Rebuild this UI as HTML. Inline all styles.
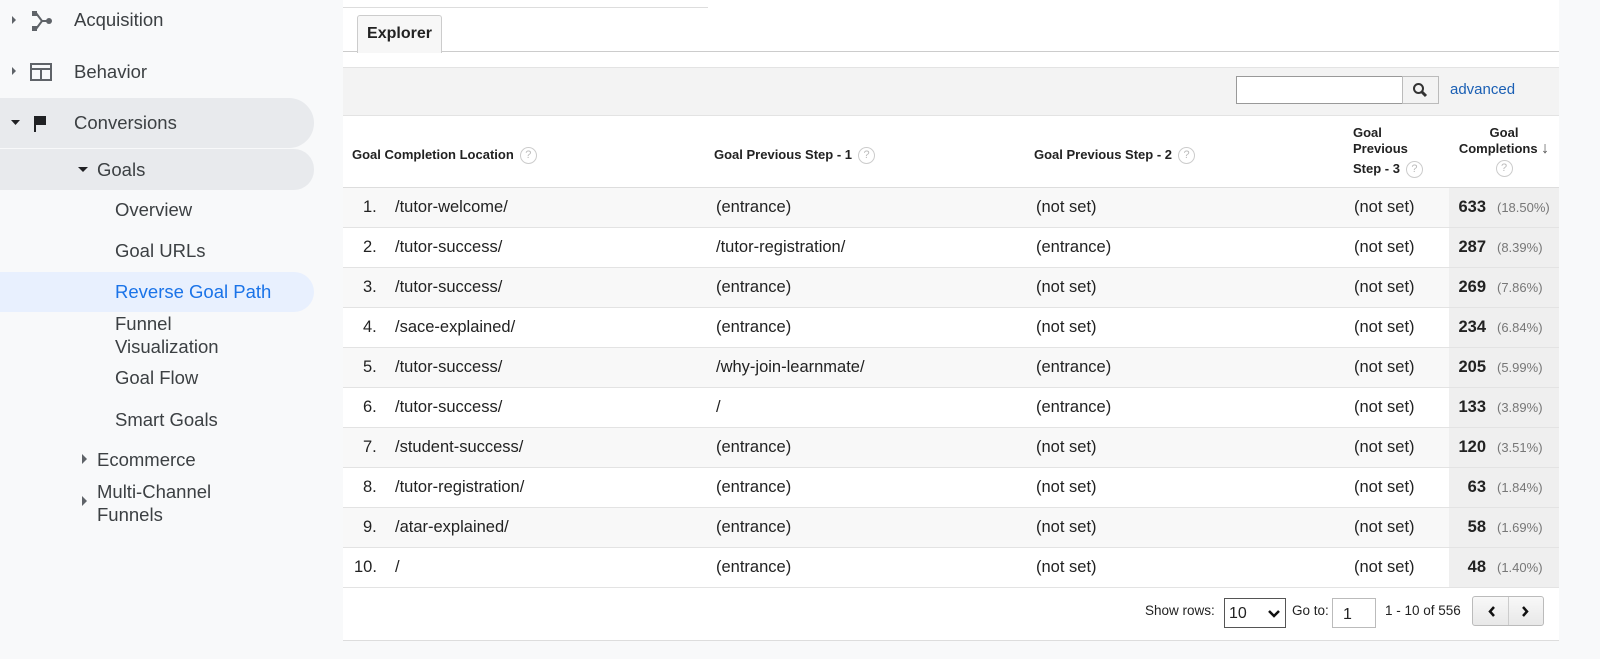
<!DOCTYPE html>
<html><head><style>
*{margin:0;padding:0;box-sizing:border-box}
body{width:1600px;height:659px;background:#f8f9fa;font-family:"Liberation Sans",Arial,sans-serif;position:relative;overflow:hidden;color:#222}
.nav{position:absolute;left:0;font-size:18.5px;color:#3c4043}
.abs{position:absolute}
.main{position:absolute;left:343px;top:0;width:1216px;height:641px;background:#fff;border-bottom:1px solid #ddd}
.q{display:inline-block;width:17px;height:17px;border:1px solid #ccc;border-radius:50%;font-size:11px;color:#bbb;text-align:center;line-height:15px;font-weight:normal;vertical-align:middle;margin-left:6px}
.row{position:absolute;left:0;width:1216px;height:40px;border-bottom:1px solid #e3e3e3;font-size:16.5px;color:#222}
.row div{position:absolute;top:10px}
.hd{position:absolute;font-size:13px;font-weight:bold;color:#222}
</style></head><body>
<div class="abs" style="left:0;top:98px;width:314px;height:50px;background:#e8eaed;border-radius:0 25px 25px 0"></div>
<div class="abs" style="left:0;top:149px;width:314px;height:41px;background:#e8eaed;border-radius:0 20px 20px 0"></div>
<div class="abs" style="left:0;top:272px;width:314px;height:40px;background:#e8f0fe;border-radius:0 20px 20px 0"></div>
<svg class="abs" style="left:10px;top:0" width="60" height="140">
<path d="M2 16l4 4-4 4z" fill="#5f6368"/>
<path d="M2 67l4 4-4 4z" fill="#5f6368"/>
<path d="M1 120h9l-4.5 5z" fill="#202124"/>
<rect x="22" y="11" width="5" height="5" fill="#5f6368"/><rect x="22" y="26" width="5" height="5" fill="#5f6368"/>
<path d="M26 13l6 8l-6 8M32 21h6" stroke="#5f6368" stroke-width="2" fill="none"/><circle cx="39" cy="21" r="3" fill="#5f6368"/>
<rect x="21" y="64" width="20" height="16" fill="none" stroke="#5f6368" stroke-width="2"/><path d="M21 69h20M31 69v11" stroke="#5f6368" stroke-width="2"/>
<path d="M24 116h12v9h-10v7h-2z" fill="#202124"/>
</svg>
<div class="nav" style="left:74px;top:9px">Acquisition</div>
<div class="nav" style="left:74px;top:61px">Behavior</div>
<div class="nav" style="left:74px;top:112px">Conversions</div>
<svg class="abs" style="left:78px;top:166px" width="12" height="8"><path d="M0 1h10l-5 5z" fill="#202124"/></svg>
<div class="nav" style="left:97px;top:159px">Goals</div>
<div class="nav" style="left:115px;top:199px">Overview</div>
<div class="nav" style="left:115px;top:240px">Goal URLs</div>
<div class="nav" style="left:115px;top:281px;color:#1a73e8">Reverse Goal Path</div>
<div class="nav" style="left:115px;top:312px;line-height:23px">Funnel<br>Visualization</div>
<div class="nav" style="left:115px;top:367px">Goal Flow</div>
<div class="nav" style="left:115px;top:409px">Smart Goals</div>
<svg class="abs" style="left:81px;top:454px" width="8" height="60"><path d="M1 0l5 5-5 5z" fill="#5f6368"/><path d="M1 42l5 5-5 5z" fill="#5f6368"/></svg>
<div class="nav" style="left:97px;top:449px">Ecommerce</div>
<div class="nav" style="left:97px;top:480px;line-height:23px">Multi-Channel<br>Funnels</div>
<div class="main">
<div class="abs" style="left:0;top:7px;width:365px;height:1px;background:#ddd"></div>
<div class="abs" style="left:0;top:51px;width:1216px;height:1px;background:#ccc"></div>
<div class="abs" style="left:14px;top:15px;width:85px;height:38px;background:#f7f7f7;border:1px solid #ccc;border-bottom:none;border-radius:3px 3px 0 0;font-weight:bold;font-size:16px;text-align:center;line-height:36px;color:#222">Explorer</div>
<div class="abs" style="left:0;top:67px;width:1216px;height:49px;background:#f3f3f3;border-top:1px solid #e3e3e3;border-bottom:1px solid #e3e3e3"></div>
<div class="abs" style="left:893px;top:76px;width:203px;height:28px;background:#fff;border:1px solid #999"></div>
<div class="abs" style="left:1059px;top:76px;width:37px;height:28px;background:#f3f3f3;border:1px solid #bbb"></div>
<svg class="abs" style="left:1069px;top:82px" width="16" height="16"><circle cx="6.5" cy="6.5" r="4.5" fill="none" stroke="#333" stroke-width="2"/><path d="M10 10l4 4" stroke="#333" stroke-width="3"/></svg>
<div class="abs" style="left:1107px;top:81px;font-size:15px;color:#1a5fb4">advanced</div>
<div class="hd" style="left:9px;top:147px">Goal Completion Location<span class="q">?</span></div>
<div class="hd" style="left:371px;top:147px">Goal Previous Step - 1<span class="q">?</span></div>
<div class="hd" style="left:691px;top:147px">Goal Previous Step - 2<span class="q">?</span></div>
<div class="hd" style="left:1010px;top:125px;line-height:16px">Goal<br>Previous<br><span style="line-height:24px">Step - 3</span><span class="q">?</span></div>
<div class="hd" style="left:1106px;top:125px;width:110px;text-align:center;line-height:16px">Goal<br>Completions <span style="font-size:16px;color:#555">&#8595;</span><br><span class="q" style="margin:3px 0 0 0">?</span></div>
<div class="abs" style="left:0;top:187px;width:1216px;height:1px;background:#ddd"></div>
<div id="rows"></div>
<div class="abs" style="left:802px;top:603px;font-size:13.5px;color:#222">Show rows:</div>
<div class="abs" style="left:881px;top:598px;width:62px;height:30px;border:1px solid #555;font-size:16px;padding:6px 0 0 4px">10<svg style="position:absolute;right:4px;top:10px" width="14" height="10"><path d="M2 2l5 5 5-5" stroke="#111" stroke-width="2.5" fill="none"/></svg></div>
<div class="abs" style="left:949px;top:603px;font-size:13.5px">Go to:</div>
<div class="abs" style="left:989px;top:598px;width:44px;height:30px;border:1px solid #bbb;font-size:16px;padding:7px 0 0 10px">1</div>
<div class="abs" style="left:1042px;top:603px;font-size:13.5px">1 - 10 of 556</div>
<div class="abs" style="left:1129px;top:596px;width:72px;height:30px;border:1px solid #bbb;border-radius:3px;background:linear-gradient(#f8f8f8,#e8e8e8)"><div class="abs" style="left:35px;top:0;width:1px;height:28px;background:#ccc"></div>
<svg class="abs" style="left:12px;top:8px" width="50" height="14"><path d="M9 2l-4 4.5 4 4.5M38 2l4 4.5-4 4.5" stroke="#111" stroke-width="2.5" fill="none"/></svg></div>
</div>
<script>
var d=[["/tutor-welcome/","(entrance)","(not set)","633","(18.50%)"],["/tutor-success/","/tutor-registration/","(entrance)","287","(8.39%)"],["/tutor-success/","(entrance)","(not set)","269","(7.86%)"],["/sace-explained/","(entrance)","(not set)","234","(6.84%)"],["/tutor-success/","/why-join-learnmate/","(entrance)","205","(5.99%)"],["/tutor-success/","/","(entrance)","133","(3.89%)"],["/student-success/","(entrance)","(not set)","120","(3.51%)"],["/tutor-registration/","(entrance)","(not set)","63","(1.84%)"],["/atar-explained/","(entrance)","(not set)","58","(1.69%)"],["/","(entrance)","(not set)","48","(1.40%)"]];
var h="";d.forEach(function(r,i){h+='<div class="row" style="top:'+(188+i*40)+'px;background:'+(i%2==0?'#f8f8f8':'#fff')+'"><div style="left:'+(i==9?11:20)+'px">'+(i+1)+'.</div><div style="left:52px">'+r[0]+'</div><div style="left:373px">'+r[1]+'</div><div style="left:693px">'+r[2]+'</div><div style="left:1011px">(not set)</div><div style="left:1106px;width:110px;height:39px;top:0;background:#efefef"></div><div style="left:1106px;width:37px;text-align:right;font-weight:bold">'+r[3]+'</div><div style="left:1154px;font-size:13px;color:#777;top:12px">'+r[4]+'</div></div>';});
document.getElementById("rows").innerHTML=h;
</script>
</body></html>
